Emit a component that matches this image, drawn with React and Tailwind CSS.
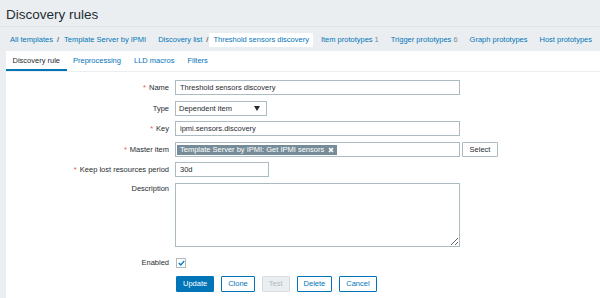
import { useState } from "react";

const BLUE = "#0275b8";

const Crumb = ({ children, active }) => (
  <span
    className={`px-[4px] leading-[14px] text-[#0275b8] ${active ? "bg-white" : ""}`}
  >
    {children}
  </span>
);

const Sep = () => <span className="text-[#1f2c33] mr-[1px]">/</span>;

const Label = ({ children, required }) => (
  <div className="w-[163px] shrink-0 text-right">
    {required && <span className="text-[#e45959] mr-[3px]">*</span>}
    {children}
  </div>
);

const Row = ({ label, required, className = "", labelClass = "items-center", children }) => (
  <div className={`flex ${labelClass} ${className}`}>
    <Label required={required}>{label}</Label>
    <div className="ml-[6px] flex items-center">{children}</div>
  </div>
);

const TextInput = ({ value, w = "w-[285px]" }) => (
  <div className={`${w} h-[15px] border border-[#acbbc2] bg-white px-[4px] leading-[13px] whitespace-nowrap`}>
    {value}
  </div>
);

const Button = ({ children, kind = "outline" }) => {
  const styles = {
    primary: "bg-[#0275b8] border-[#0275b8] text-white",
    outline: "bg-white border-[#0275b8] text-[#0275b8]",
    disabled: "bg-[#ebeef0] border-[#d5dde1] text-[#acbbc2]",
  };
  return (
    <button
      type="button"
      className={`h-[16px] px-[6px] border rounded-[1px] leading-[14px] ${styles[kind]}`}
    >
      {children}
    </button>
  );
};

export default function App() {
  const [enabled, setEnabled] = useState(true);
  const tabs = ["Discovery rule", "Preprocessing", "LLD macros", "Filters"];

  return (
    <div className="w-[600px] h-[298px] overflow-hidden bg-[#ebeef0] text-[7.5px] text-[#1f2c33] font-['Liberation_Sans',Arial,sans-serif]">
      {/* Title */}
      <header className="h-[26px] pl-[6px] pt-[7px]">
        <h1 className="text-[13.5px] leading-[16px] text-[#1f2c33]">Discovery rules</h1>
      </header>

      {/* Breadcrumbs */}
      <nav className="h-[25px] border-t border-[#dde3e6] flex items-start pt-[6px] pl-[6px] gap-[4px] whitespace-nowrap">
        <div className="flex items-center">
          <Crumb>All templates</Crumb>
          <Sep />
          <Crumb>Template Server by IPMI</Crumb>
        </div>
        <div className="flex items-center">
          <Crumb>Discovery list</Crumb>
          <Sep />
          <Crumb active>Threshold sensors discovery</Crumb>
        </div>
        <Crumb>
          Item prototypes<span className="ml-[2px] text-[#768d99]">1</span>
        </Crumb>
        <Crumb>
          Trigger prototypes<span className="ml-[2px] text-[#768d99]">6</span>
        </Crumb>
        <Crumb>Graph prototypes</Crumb>
        <Crumb>Host prototypes</Crumb>
      </nav>

      {/* Tabs + form */}
      <div className="ml-[6px] bg-white h-[247px]">
        <div className="h-[21px] flex border-b border-[#ebeef0]">
          {tabs.map((t, i) => (
            <div
              key={t}
              className={`px-[6.5px] leading-[20px] ${
                i === 0 ? "text-[#1f2c33] border-b-2 border-[#0275b8]" : "text-[#0275b8]"
              }`}
            >
              {t}
            </div>
          ))}
        </div>

        <div className="pt-[8px] flex flex-col">
          <Row label="Name" required>
            <TextInput value="Threshold sensors discovery" />
          </Row>

          <Row label="Type" className="mt-[6px]">
            <div className="w-[92px] h-[15px] border border-[#acbbc2] bg-white pl-[3px] pr-[6px] flex items-center justify-between leading-[13px]">
              <span>Dependent item</span>
              <svg width="6" height="5" viewBox="0 0 6 5">
                <path d="M0 0 L6 0 L3 5 Z" fill="#1f2c33" />
              </svg>
            </div>
          </Row>

          <Row label="Key" required className="mt-[5px]">
            <TextInput value="ipmi.sensors.discovery" />
          </Row>

          <Row label="Master item" required className="mt-[6px]">
            <div className="w-[285px] h-[15px] border border-[#acbbc2] bg-white px-[1px] flex items-center">
              <span className="h-[10px] bg-[#768d99] text-white leading-[10px] pl-[3px] pr-[3px] flex items-center gap-[4px] whitespace-nowrap">
                Template Server by IPMI: Get IPMI sensors
                <svg width="6" height="6" viewBox="0 0 6 6">
                  <path d="M1 1 L5 5 M5 1 L1 5" stroke="white" strokeWidth="1.6" />
                </svg>
              </span>
            </div>
            <button
              type="button"
              className="ml-[2px] w-[36px] h-[15px] border border-[#acbbc2] bg-white leading-[13px] text-[#1f2c33] rounded-[1px]"
            >
              Select
            </button>
          </Row>

          <Row label="Keep lost resources period" required className="mt-[5px]">
            <TextInput value="30d" w="w-[94px]" />
          </Row>

          <Row label="Description" className="mt-[6px]" labelClass="items-start">
            <textarea
              readOnly
              className="w-[285px] h-[64px] border border-[#acbbc2] bg-white outline-none"
            />
          </Row>

          <Row label="Enabled" className="mt-[9px] h-[14px]">
            <button
              type="button"
              onClick={() => setEnabled(!enabled)}
              className="w-[10px] h-[10px] border border-[#acbbc2] bg-white flex items-center justify-center ml-[1px]"
            >
              {enabled && (
                <svg width="7" height="6" viewBox="0 0 7 6">
                  <path d="M0.8 3 L2.8 5 L6.3 0.8" fill="none" stroke={BLUE} strokeWidth="1.3" />
                </svg>
              )}
            </button>
          </Row>

          <div className="mt-[6px] ml-[170px] flex gap-[7px]">
            <Button kind="primary">Update</Button>
            <Button>Clone</Button>
            <Button kind="disabled">Test</Button>
            <Button>Delete</Button>
            <Button>Cancel</Button>
          </div>
        </div>
      </div>
    </div>
  );
}
